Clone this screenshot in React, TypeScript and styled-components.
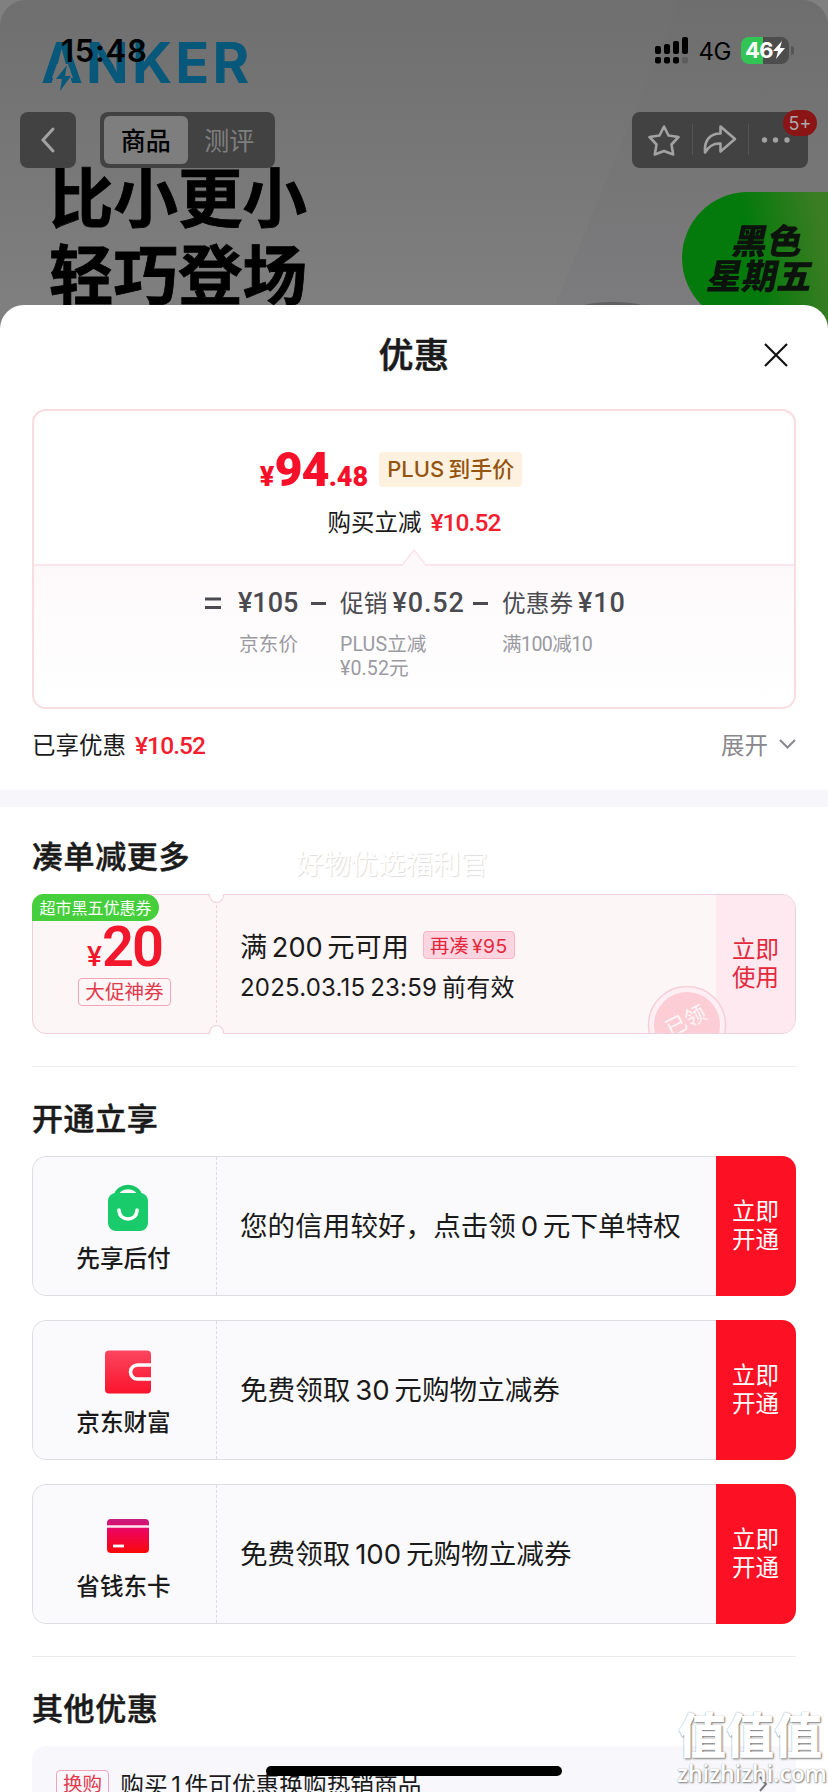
import React from 'react';
import styled, { createGlobalStyle, css } from 'styled-components';

const GlobalStyle = createGlobalStyle`
  * { box-sizing: border-box; }
  body {
    margin: 0;
    background: #fff;
    font-family: Inter, "Noto Sans CJK SC", sans-serif;
    color: #1a1a1a;
  }
`;

const Screen = styled.div`
  position: relative;
  width: 828px;
  height: 1792px;
  overflow: hidden;
  display: flex;
  flex-direction: column;
  background: #7c7c7c;
`;

/* ---------- dimmed product page ---------- */

const Hero = styled.header`
  position: relative;
  height: 305px;
  flex: none;
  padding-top: 30px;
`;

const HeroArt = styled.svg`
  position: absolute;
  left: 0;
  top: 0;
`;

const StatusBar = styled.div`
  position: relative;
  display: flex;
  align-items: center;
  justify-content: space-between;
  height: 40px;
  padding: 0 34px 0 61px;
  color: #000;
`;

const Clock = styled.span`
  font-size: 31px;
  font-weight: 600;
  letter-spacing: 0.7px;
`;

const StatusIcons = styled.div`
  display: flex;
  align-items: center;
`;

const Network = styled.span`
  margin: 2px 10px 0 11px;
  font-size: 24px;
  font-weight: 400;
  letter-spacing: -0.5px;
`;

const Battery = styled.div`
  display: flex;
  align-items: center;
  justify-content: center;
  width: 48px;
  height: 27px;
  border-radius: 8px;
  background: linear-gradient(90deg, #32c455 0 22px, #4d4d4d 22px);
  color: #fff;
  font-size: 22px;
  font-weight: 700;
  letter-spacing: -0.5px;
`;

const BatteryTip = styled.div`
  width: 3px;
  height: 9px;
  margin-left: 2px;
  border-radius: 0 3px 3px 0;
  background: #555;
`;

const NavBar = styled.nav`
  position: relative;
  display: flex;
  align-items: center;
  height: 56px;
  margin-top: 42px;
  padding: 0 20px;
`;

const NavBlock = styled.div<{ $width: number }>`
  position: relative;
  display: flex;
  align-items: center;
  width: ${(p) => p.$width}px;
  height: 56px;
  border-radius: 8px;
  background: #424242;
`;

const BackButton = styled(NavBlock)`
  justify-content: center;
`;

const Tabs = styled(NavBlock)`
  margin-left: 24px;
  padding: 4px;
`;

const Tab = styled.span<{ $active?: boolean }>`
  display: flex;
  align-items: center;
  justify-content: center;
  width: 84px;
  height: 48px;
  padding-bottom: 3px;
  border-radius: 6px;
  font-size: 25px;
  ${(p) =>
    p.$active
      ? css`
          background: #7e7e7e;
          color: #000;
          font-weight: 500;
        `
      : css`
          color: #7f7f7f;
        `}
`;

const Actions = styled(NavBlock)`
  margin-left: auto;
`;

const CountBadge = styled.span`
  position: absolute;
  top: -2px;
  right: -9px;
  width: 34px;
  height: 26px;
  border-radius: 13px;
  background: #8b1515;
  color: #aaa;
  font-size: 18px;
  line-height: 28px;
  text-align: center;
`;

const Brand = styled.div`
  position: absolute;
  left: 41px;
  top: 34px;
  color: #07587a;
  font-size: 56px;
  line-height: 58px;
  font-weight: 700;
  letter-spacing: 3.2px;
`;

const Slogan = styled.div`
  position: absolute;
  left: 49px;
  top: 156px;
  color: #000;
  font-family: "Noto Sans CJK SC", sans-serif;
  font-size: 64.5px;
  line-height: 77px;
  font-weight: 700;
  -webkit-text-stroke: 0.8px #000;
`;

const FridayPill = styled.div`
  position: absolute;
  left: 682px;
  top: 192px;
  width: 160px;
  height: 132px;
  padding: 29px 0 0 25px;
  border-radius: 66px 0 0 66px;
  background: linear-gradient(80deg, #057a0c 0 45%, #3b7d22 85%);
`;

const FridayText = styled.div`
  width: 116px;
  color: #0c120c;
  font-family: "Noto Sans CJK SC", sans-serif;
  font-size: 35px;
  line-height: 35px;
  font-weight: 900;
  text-align: center;
  transform: skewX(-12deg);
`;

/* ---------- bottom sheet ---------- */

const Sheet = styled.main`
  position: relative;
  flex: none;
  height: 1487px;
  border-radius: 24px 24px 0 0;
  background: #fff;
  overflow: hidden;
`;

const SheetHeader = styled.div`
  display: flex;
  align-items: center;
  justify-content: center;
  position: relative;
  height: 104px;
  padding-bottom: 9px;
`;

const SheetTitle = styled.h1`
  margin: 0;
  font-size: 35px;
  font-weight: 500;
  letter-spacing: 0.4px;
  -webkit-text-stroke: 0.6px currentColor;
`;

const CloseButton = styled.svg`
  position: absolute;
  right: 40px;
  top: 38px;
`;

const Body = styled.div`
  padding: 0 32px;
`;

const PriceCard = styled.section`
  height: 300px;
  border: 2px solid #f9dce2;
  border-radius: 14px;
  overflow: hidden;
`;

const PriceTop = styled.div`
  display: flex;
  flex-direction: column;
  align-items: center;
  height: 153px;
  padding-top: 41px;
`;

const PriceRow = styled.div`
  display: flex;
  align-items: center;
  height: 35px;
  margin-right: 46px;
`;

const Red = styled.span<{ $gap: number }>`
  margin-left: ${(p) => p.$gap}px;
  color: #f2202f;
  font-family: Roboto, sans-serif;
  font-size: 24.5px;
  font-weight: 500;
  letter-spacing: -0.9px;
`;

const BigPrice = styled.span`
  display: flex;
  align-items: baseline;
  padding-top: 8px;
  color: #f8102a;
  font-family: Roboto, sans-serif;
  font-size: 27px;
  font-weight: 900;
  line-height: 35px;
  b {
    font-size: 48.5px;
    font-weight: 900;
    letter-spacing: -1px;
  }
`;

const PlusTag = styled.span`
  display: flex;
  gap: 4px;
  height: 35px;
  margin-left: 11px;
  padding: 0 8px;
  border-radius: 4px;
  background: #fff1df;
  color: #945510;
  font-size: 22px;
  line-height: 35px;
  font-weight: 500;
  white-space: nowrap;
`;

const SavingLine = styled.div`
  margin-top: 18px;
  height: 36px;
  font-size: 23.5px;
  line-height: 36px;
`;

const PriceBottom = styled.div`
  position: relative;
  display: flex;
  justify-content: center;
  height: 143px;
  padding-top: 19px;
  border-top: 2px solid #fbe4ea;
  background: linear-gradient(#fdf9fb, #fff);
`;

const Notch = styled.svg`
  position: absolute;
  left: 368px;
  top: -18px;
`;

const Term = styled.div<{ $width: number }>`
  width: ${(p) => p.$width}px;
  color: #4a4a50;
  white-space: nowrap;
`;

const TermValue = styled.div`
  height: 36px;
  font-size: 23.7px;
  line-height: 36px;
  b {
    margin-left: 5px;
    font-family: Roboto, sans-serif;
    font-size: 27px;
    font-weight: 500;
    letter-spacing: 0.9px;
  }
  b:only-child {
    letter-spacing: 0.9px;
  }
`;

const BasePrice = styled(TermValue)`
  b {
    margin-left: -1px;
  }
  b:only-child {
    letter-spacing: 0;
  }
`;

const TermNote = styled.div<{ $tight?: boolean }>`
  margin-top: 12px;
  color: #9a9aa2;
  font-family: Roboto, "Noto Sans CJK SC", sans-serif;
  font-size: 19.6px;
  line-height: 24px;
  letter-spacing: ${(p) => (p.$tight ? -0.6 : 0.1)}px;
`;

const Operator = styled.svg`
  flex: none;
`;

const Summary = styled.div`
  display: flex;
  align-items: center;
  justify-content: space-between;
  height: 81px;
  padding: 0 0 12px;
  font-size: 23.5px;
`;

const Expand = styled.span`
  display: flex;
  align-items: center;
  gap: 11px;
  color: #88888e;
`;

const Band = styled.div`
  height: 17px;
  background: #f6f6fb;
`;

const SectionTitle = styled.h2<{ $height: number; $drop: number }>`
  height: ${(p) => p.$height}px;
  margin: 0;
  padding-top: ${(p) => p.$drop}px;
  font-size: 31px;
  line-height: 44px;
  font-weight: 500;
  letter-spacing: 0.6px;
  -webkit-text-stroke: 0.5px currentColor;
`;

const CouponFrame = styled.div`
  position: relative;
`;

const Coupon = styled.section`
  position: relative;
  display: flex;
  height: 140px;
  border: 1px solid #f1cfdb;
  border-radius: 14px;
  background: #fcf6f7;
  overflow: hidden;
`;

const CouponLeft = styled.div`
  display: flex;
  flex-direction: column;
  align-items: center;
  width: 184px;
  flex: none;
  padding-top: 25px;
  border-right: 1px dashed #f3d3dd;
`;

const CornerTag = styled.span`
  position: absolute;
  left: 0;
  top: 0;
  width: 127px;
  height: 27px;
  border-radius: 12px 14px 14px 0;
  background: #45cf3c;
  color: #fff;
  font-size: 16px;
  line-height: 28px;
  text-align: center;
  white-space: nowrap;
`;

const Amount = styled.span`
  height: 48px;
  color: #f2172b;
  font-family: Roboto, sans-serif;
  font-size: 28px;
  font-weight: 500;
  line-height: 54px;
  b {
    font-size: 56px;
    font-weight: 600;
    letter-spacing: -2px;
  }
`;

const OutlineTag = styled.span<{ $drop?: number }>`
  display: inline-block;
  height: 28px;
  margin-top: ${(p) => p.$drop ?? 0}px;
  padding: 0 6px;
  border: 1px solid #f3a5b6;
  border-radius: 4px;
  color: #e33a4c;
  font-size: 19.6px;
  line-height: 26px;
  white-space: nowrap;
`;

const CouponText = styled.div`
  flex: 1;
  padding: 29px 0 0 23px;
`;

const CouponRule = styled.div`
  display: flex;
  align-items: center;
  height: 42px;
  padding-bottom: 1px;
  font-size: 27.2px;
  word-spacing: -3px;
`;

const GapTag = styled.span`
  height: 28px;
  margin-left: 14px;
  padding: 1px 6px 0;
  border: 1px solid #f8b3c6;
  border-radius: 4px;
  background: #fdd5e0;
  color: #e3283b;
  font-size: 19.3px;
  letter-spacing: 0.4px;
  line-height: 26px;
`;

const CouponDate = styled.div`
  height: 40px;
  font-size: 24px;
  line-height: 43px;
  word-spacing: -2px;
  letter-spacing: 0.2px;
`;

const SideButton = styled.div<{ $solid?: boolean }>`
  display: flex;
  align-items: center;
  justify-content: center;
  width: ${(p) => (p.$solid ? 80 : 79)}px;
  flex: none;
  padding: 0 16px;
  background: ${(p) => (p.$solid ? '#fc1023' : '#fde9ef')};
  color: ${(p) => (p.$solid ? '#fff' : '#e3283b')};
  font-size: 23.5px;
  line-height: 28px;
`;

const Scallop = styled.span<{ $bottom?: boolean }>`
  position: absolute;
  left: 177px;
  width: 15px;
  height: 9px;
  border: 1px solid #f1cfdb;
  background: #fff;
  ${(p) =>
    p.$bottom
      ? css`
          bottom: 0;
          border-bottom: 0;
          border-radius: 8px 8px 0 0;
        `
      : css`
          top: 0;
          border-top: 0;
          border-radius: 0 0 8px 8px;
        `}
`;

const Stamp = styled.svg`
  position: absolute;
  left: 614px;
  top: 90px;
`;

const Spacer = styled.div`
  height: 32px;
`;

const Divider = styled.div`
  height: 1px;
  background: #ebebef;
`;

const OfferList = styled.div`
  display: flex;
  flex-direction: column;
  gap: 24px;
`;

const Offer = styled.section`
  display: flex;
  height: 140px;
  border-radius: 14px;
  overflow: hidden;
`;

const OfferMain = styled.div`
  display: flex;
  flex: 1;
  border: 1px solid #dedee2;
  border-right: 0;
  border-radius: 14px 0 0 14px;
  background: #fafafc;
`;

const OfferBrand = styled.div`
  display: flex;
  flex-direction: column;
  align-items: center;
  width: 184px;
  flex: none;
  padding: 27px 0 0 6px;
  border-right: 1px dashed #dcdce2;
`;

const OfferName = styled.span`
  margin: 9px 8px 0 0;
  font-size: 23.6px;
  line-height: 36px;
  font-weight: 500;
`;

const OfferText = styled.div`
  flex: 1;
  padding-left: 23px;
  font-size: 27.6px;
  line-height: 139px;
  word-spacing: -3px;
  white-space: nowrap;
`;

const ExtraRow = styled.section`
  display: flex;
  align-items: center;
  height: 80px;
  padding: 0 28px 5px 24px;
  border-radius: 14px 14px 0 0;
  background: #f7f7fc;
  font-size: 23.7px;
  svg {
    margin-left: auto;
  }
`;

const ExtraText = styled.span`
  margin-left: 11px;
  word-spacing: -3px;
  white-space: nowrap;
`;

const HomeIndicator = styled.div`
  position: absolute;
  left: 266px;
  top: 1766px;
  width: 296px;
  height: 10px;
  border-radius: 5px;
  background: #000;
`;

const FaintMark = styled.div`
  position: absolute;
  left: 296px;
  top: 844px;
  color: #fff;
  font-size: 27.4px;
  line-height: 40px;
  text-shadow: 1px 1px 1px #dedede;
`;

const SiteMark = styled.div`
  position: absolute;
  left: 677px;
  top: 1704px;
  width: 146px;
  color: #fff;
  font-family: "Noto Sans CJK SC", sans-serif;
  font-size: 48px;
  line-height: 57px;
  font-weight: 900;
  text-align: center;
  white-space: nowrap;
  text-shadow: 1px 1px 2px #777, 0 0 1px #999;
  small {
    display: block;
    font-family: "Open Sans", sans-serif;
    font-size: 23px;
    line-height: 24px;
    font-weight: 600;
  }
`;

const BagIcon = () => (
  <svg width="46" height="48" viewBox="0 0 46 48">
    <path d="M11 12C13 0 33 0 35 12" fill="none" stroke="#17c765" strokeWidth="4.5" />
    <rect x="3" y="9" width="40" height="38" rx="8" fill="#19cb6b" />
    <path d="M14 26c0 12 18 12 18 0" fill="none" stroke="#fff" strokeWidth="3.500" strokeLinecap="round" />
  </svg>
);

const WalletIcon = () => (
  <svg width="46" height="48" viewBox="0 0 46 48">
    <defs>
      <linearGradient id="wallet" x1="0" y1="0" x2="0" y2="1">
        <stop offset="0" stopColor="#fb465f" />
        <stop offset="1" stopColor="#fb142d" />
      </linearGradient>
    </defs>
    <rect y="2.500" width="46" height="43" rx="4" fill="url(#wallet)" />
    <path d="M46 17H32.500a7 7 0 0 0 0 14H46" fill="none" stroke="#fff" strokeWidth="3.600" />
  </svg>
);

const CardIcon = () => (
  <svg width="46" height="48" viewBox="0 0 46 48">
    <defs>
      <linearGradient id="card" x1="0" y1="0" x2="0" y2="1">
        <stop offset="0" stopColor="#c81c80" />
        <stop offset="0.35" stopColor="#ed045c" />
        <stop offset="1" stopColor="#fa0808" />
      </linearGradient>
    </defs>
    <rect x="2" y="7" width="42" height="34" rx="4" fill="url(#card)" />
    <path d="M2 14.500h42" stroke="#fde6f2" strokeWidth="2.600" />
    <path d="M8 34h11" stroke="#fff" strokeWidth="2.800" />
  </svg>
);

const offers = [
  { name: '先享后付', icon: <BagIcon />, text: '您的信用较好，点击领 0 元下单特权' },
  { name: '京东财富', icon: <WalletIcon />, text: '免费领取 30 元购物立减券' },
  { name: '省钱东卡', icon: <CardIcon />, text: '免费领取 100 元购物立减券' },
];

const bars = [
  { x: 0, y: 9, h: 8 },
  { x: 9, y: 7, h: 10 },
  { x: 18, y: 4, h: 13 },
  { x: 27, y: 0, h: 17 },
];

const SignalIcon = () => (
  <svg width="33" height="27" viewBox="0 0 33 27">
    {bars.map((b, i) => (
      <g key={b.x}>
        <rect x={b.x} y={b.y} width="6" height={b.h} rx="2" fill="#000" />
        <rect x={b.x} y="20" width="6" height="6.500" rx="2" fill={i < 3 ? '#000' : '#5d5d5d'} />
      </g>
    ))}
  </svg>
);

const ActionIcons = () => (
  <svg width="176" height="56" viewBox="0 0 176 56" fill="none" stroke="#a2a2a2" strokeWidth="2.600" strokeLinejoin="round">
    <path d="M32 14.500l4.500 9 10 1.500-7 7.500 1.700 10-9.200-3.500-9.200 3.500 1.700-10-7-7.500 10-1.500z" />
    <path d="M88.500 14.500l14.500 12.500-14.500 12.500v-8c-8-.5-12 3-15.500 9-1-11 4-19 15.500-19z" />
    <path d="M60.500 12v31M116.500 12v31" stroke="#555" strokeWidth="1" />
    <g fill="#a2a2a2" stroke="none">
      <circle cx="132.500" cy="28" r="2.700" />
      <circle cx="143.500" cy="28" r="2.700" />
      <circle cx="155" cy="28" r="2.700" />
    </g>
  </svg>
);

const Minus = () => (
  <Operator width="42" height="36" viewBox="0 0 42 36">
    <path d="M13 18.500h15" stroke="#4a4a50" strokeWidth="3" />
  </Operator>
);

export default function App() {
  return (
    <Screen>
      <GlobalStyle />
      <Hero>
        <HeroArt width="828" height="330" viewBox="0 0 828 330">
          <defs>
            <linearGradient id="wall" x1="0" y1="0" x2="0" y2="1">
              <stop offset="0" stopColor="#6f6f6f" />
              <stop offset="1" stopColor="#828282" />
            </linearGradient>
            <linearGradient id="panel" x1="0" y1="0" x2="0" y2="1">
              <stop offset="0" stopColor="#6e6e6e" />
              <stop offset="1" stopColor="#7d7d7f" />
            </linearGradient>
          </defs>
          <rect width="828" height="330" fill="#808080" />
          <rect width="828" height="360" rx="26" fill="url(#wall)" />
          <path d="M680 0h122a26 26 0 0 1 26 26v304H545z" fill="url(#panel)" />
          <ellipse cx="613" cy="313" rx="42" ry="11" fill="#606060" />
        </HeroArt>
        <Brand>ANKER</Brand>
        <HeroArt width="100" height="100" viewBox="0 0 100 100">
          <path d="M57 64h11l5 14H52z" fill="#737373" />
          <path d="M67 65L56 79h6l-2 12 11-15h-6z" fill="#07587a" />
        </HeroArt>
        <Slogan>
          比小更小
          <br />
          轻巧登场
        </Slogan>
        <FridayPill>
          <FridayText>
            黑色
            <br />
            星期五
          </FridayText>
        </FridayPill>
        <StatusBar>
          <Clock>15:48</Clock>
          <StatusIcons>
            <SignalIcon />
            <Network>4G</Network>
            <Battery>
              46
              <svg width="12" height="18" viewBox="0 0 12 18">
                <path d="M9 0L0 10h5l-2 8 9-11H7z" fill="#fff" />
              </svg>
            </Battery>
            <BatteryTip />
          </StatusIcons>
        </StatusBar>
        <NavBar>
          <BackButton $width={56}>
            <svg width="16" height="28" viewBox="0 0 16 28">
              <path d="M13 3L3 14l10 11" fill="none" stroke="#a2a2a2" strokeWidth="3" strokeLinecap="round" />
            </svg>
          </BackButton>
          <Tabs $width={175}>
            <Tab $active>商品</Tab>
            <Tab>测评</Tab>
          </Tabs>
          <Actions $width={176}>
            <ActionIcons />
            <CountBadge>5+</CountBadge>
          </Actions>
        </NavBar>
      </Hero>

      <Sheet>
        <SheetHeader>
          <SheetTitle>优惠</SheetTitle>
          <CloseButton width="24" height="24" viewBox="0 0 24 24">
            <path d="M1 1l22 22M23 1L1 23" stroke="#111" strokeWidth="2.200" />
          </CloseButton>
        </SheetHeader>
        <Body>
          <PriceCard>
            <PriceTop>
              <PriceRow>
                <BigPrice>
                  ¥<b>94</b>.48
                </BigPrice>
                <PlusTag>
                  <span>PLUS</span>
                  <span>到手价</span>
                </PlusTag>
              </PriceRow>
              <SavingLine>
                购买立减
                <Red $gap={9}>¥10.52</Red>
              </SavingLine>
            </PriceTop>
            <PriceBottom>
              <Notch width="24" height="19" viewBox="0 0 24 19">
                <path d="M0 19L12 2l12 17z" fill="#fdf9fb" />
                <path d="M0 17.500L12 2l12 15.500" fill="none" stroke="#fbe4ea" strokeWidth="1.500" />
              </Notch>
              <Operator width="34" height="36" viewBox="0 0 34 36">
                <path d="M0 14h16M0 22.500h16" stroke="#4a4a50" strokeWidth="2.800" />
              </Operator>
              <Term $width={59}>
                <BasePrice><b>¥105</b></BasePrice>
                <TermNote>京东价</TermNote>
              </Term>
              <Minus />
              <Term $width={120}>
                <TermValue>促销<b>¥0.52</b></TermValue>
                <TermNote>
                  PLUS立减
                  <br />
                  ¥0.52元
                </TermNote>
              </Term>
              <Minus />
              <Term $width={121}>
                <TermValue>优惠券<b>¥10</b></TermValue>
                <TermNote $tight>满100减10</TermNote>
              </Term>
            </PriceBottom>
          </PriceCard>
          <Summary>
            <span>
              已享优惠
              <Red $gap={9}>¥10.52</Red>
            </span>
            <Expand>
              展开
              <svg width="17" height="10" viewBox="0 0 17 10">
                <path d="M1 1l7.500 7.500L16 1" fill="none" stroke="#88888e" strokeWidth="2" />
              </svg>
            </Expand>
          </Summary>
        </Body>
        <Band />
        <Body>
          <SectionTitle $height={87} $drop={28}>凑单减更多</SectionTitle>
          <CouponFrame>
            <Coupon>
              <CouponLeft>
                <Amount>
                  ¥<b>20</b>
                </Amount>
                <OutlineTag $drop={10}>大促神券</OutlineTag>
              </CouponLeft>
              <CouponText>
                <CouponRule>
                  满 200 元可用
                  <GapTag>再凑 ¥95</GapTag>
                </CouponRule>
                <CouponDate>2025.03.15 23:59 前有效</CouponDate>
              </CouponText>
              <SideButton>立即使用</SideButton>
              <Stamp width="80" height="80" viewBox="0 0 80 80">
                <circle cx="40" cy="40" r="38.500" fill="#fdeff3" stroke="#f6cfda" strokeWidth="1.500" />
                <circle cx="40" cy="40" r="33" fill="#fccdd5" />
                <text x="40" y="43" fill="#fff" fillOpacity="0.85" fontSize="21" textAnchor="middle" transform="rotate(-27 40 38)">
                  已领
                </text>
              </Stamp>
            </Coupon>
            <CornerTag>超市黑五优惠券</CornerTag>
            <Scallop />
            <Scallop $bottom />
          </CouponFrame>
          <Spacer />
          <Divider />
          <SectionTitle $height={89} $drop={30}>开通立享</SectionTitle>
          <OfferList>
            {offers.map((o) => (
              <Offer key={o.name}>
                <OfferMain>
                  <OfferBrand>
                    {o.icon}
                    <OfferName>{o.name}</OfferName>
                  </OfferBrand>
                  <OfferText>{o.text}</OfferText>
                </OfferMain>
                <SideButton $solid>立即开通</SideButton>
              </Offer>
            ))}
          </OfferList>
          <Spacer />
          <Divider />
          <SectionTitle $height={89} $drop={30}>其他优惠</SectionTitle>
          <ExtraRow>
            <OutlineTag>换购</OutlineTag>
            <ExtraText>购买 1 件可优惠换购热销商品</ExtraText>
            <svg width="9" height="16" viewBox="0 0 9 16">
              <path d="M1 1l6 7-6 7" fill="none" stroke="#777" strokeWidth="2" />
            </svg>
          </ExtraRow>
        </Body>
      </Sheet>

      <FaintMark>好物优选福利官</FaintMark>
      <SiteMark>
        值值值
        <small>zhizhizhi.com</small>
      </SiteMark>
      <HomeIndicator />
    </Screen>
  );
}
